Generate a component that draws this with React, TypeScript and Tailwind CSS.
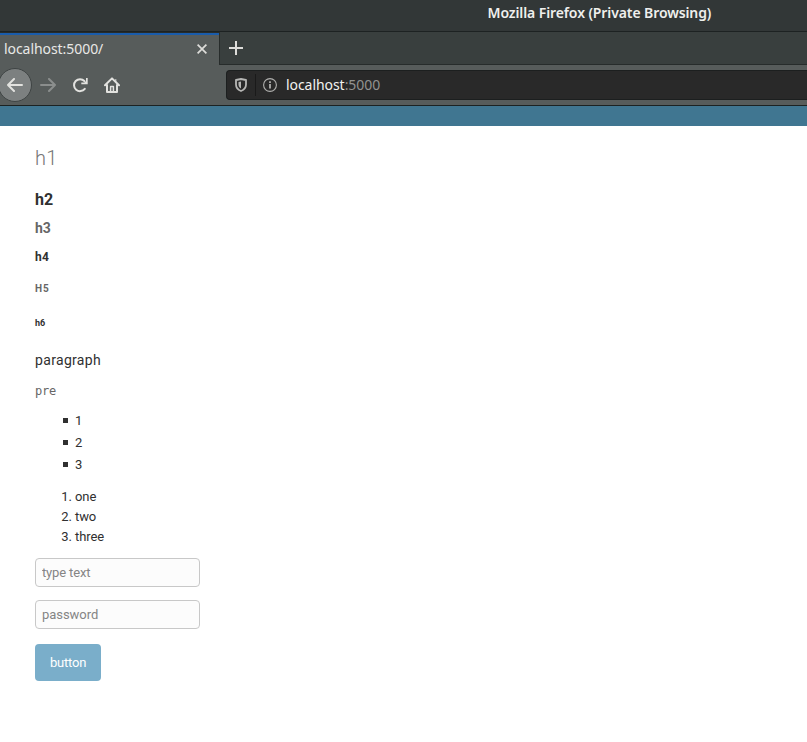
import React from "react";

const chromeFont = "font-['Noto_Sans','Open_Sans',sans-serif]";

function TabStrip() {
  return (
    <div className="flex h-[33px]">
      <div className="flex h-[33px] w-[219px] flex-col bg-[#575c5b]">
        <div className="h-px bg-[#272c2b]" />
        <div className="h-[2px] bg-[#1a5cab]" />
        <div className="flex flex-1 items-center justify-between pb-px pl-1 pr-[12px]">
          <span className="mb-[2px] whitespace-nowrap text-[14px] leading-5 tracking-[-0.06px] text-[#e8e8e6]">localhost:5000/</span>
          <svg className="mb-[2px]" width="10" height="10" viewBox="0 0 10 10" fill="none" stroke="#deddda" strokeWidth="1.7">
            <path d="M.6.6l8.800 8.800M9.400.6L.6 9.400" />
          </svg>
        </div>
      </div>
      <div className="flex flex-1 items-center border-b border-l border-[#272c2b] bg-[#393f3e] pl-[9px]">
        <svg width="14" height="14" viewBox="0 0 14 14" fill="none" stroke="#deddda" strokeWidth="2">
          <path d="M7 0v14M0 7h14" />
        </svg>
      </div>
    </div>
  );
}

function NavBar() {
  return (
    <div className="flex h-[41px] items-center border-b border-[#1c2222] bg-[#575c5b]">
      <div className="-ml-[2px] flex h-[34px] w-[34px] shrink-0 items-center justify-center rounded-full border border-[#3f4444] bg-[#7c8080]">
        <svg width="16" height="14" viewBox="0 0 16 14" fill="none" stroke="#e2e2df" strokeWidth="2" strokeLinecap="round" strokeLinejoin="round">
          <path d="M15 7H1M7 1L1 7l6 6" />
        </svg>
      </div>
      <svg className="ml-2 shrink-0" width="16" height="14" viewBox="0 0 16 14" fill="none" stroke="#8b8e8d" strokeWidth="2" strokeLinecap="round" strokeLinejoin="round">
        <path d="M1 7h14M9 1l6 6-6 6" />
      </svg>
      <svg className="ml-4 shrink-0" width="16" height="16" viewBox="0 0 16 16">
        <path d="M12.800 11.800A6 6 0 1 1 12.400 4" fill="none" stroke="#e2e2df" strokeWidth="2" strokeLinecap="round" />
        <path d="M15.700 1v6.200H9.300V5.600h3L14 3.900V1z" fill="#e2e2df" />
      </svg>
      <svg className="ml-4 shrink-0" width="16" height="16" viewBox="0 0 16 16" fill="none" stroke="#e2e2df" strokeWidth="2" strokeLinecap="round" strokeLinejoin="round">
        <path d="M1 8.300L8 1.400l7 6.900M3 8v7h10V8" />
        <path d="M6.600 14.500V9.600h2.800v4.900" strokeWidth="1.500" />
        <path d="M11.800 2.500v2" strokeWidth="1" />
      </svg>
      <div className="ml-[106px] flex h-[30px] flex-1 items-center rounded-l border border-r-0 border-[#1c1f1f] bg-[#292929]">
        <svg className="ml-2 shrink-0" width="12" height="14" viewBox="0 0 12 14" fill="none">
          <path d="M6 1L11 2v4.500C11 10 8.500 12 6 13 3.500 12 1 10 1 6.500V2z" stroke="#b6b6b4" strokeWidth="1.800" strokeLinejoin="round" />
          <path d="M6 3.500v7C4.500 9.700 3.500 8.500 3.500 6.500V4z" fill="#b6b6b4" />
        </svg>
        <div className="ml-2 h-[22px] w-px bg-[#1a1a1a]" />
        <svg className="ml-[7px] shrink-0" width="14" height="14" viewBox="0 0 14 14" fill="none">
          <circle cx="7" cy="7" r="6.400" stroke="#b0b0ae" strokeWidth="1.100" />
          <path d="M7 6v4.500M7 3.300v1.700" stroke="#b6b6b4" strokeWidth="1.700" />
        </svg>
        <span className="ml-[9px] whitespace-nowrap text-[14px] leading-5 tracking-[-0.06px] text-[#f2f2f0]">
          localhost<span className="text-[#929290]">:5000</span>
        </span>
      </div>
    </div>
  );
}

export default function App() {
  return (
    <div className="h-[742px] w-[807px] overflow-hidden bg-white font-[Roboto,sans-serif] text-[#303030]">
      <header className={chromeFont}>
        <div className="flex h-8 border-b border-[#1d2222] bg-[#323737] pl-[487.500px] pt-[3px]">
          <span className="whitespace-nowrap text-[14px] font-semibold leading-5 tracking-[-0.1px] text-[#efefed]">
            Mozilla Firefox (Private Browsing)
          </span>
        </div>
        <TabStrip />
        <NavBar />
      </header>
      <div className="h-5 bg-[#407691]" />
      <main className="flex flex-col items-start pl-[35px] pt-[18px]">
        <h1 className="text-[20px] font-light leading-7 tracking-[0.3px] text-[#777]">h1</h1>
        <h2 className="mt-[18px] text-[16px] font-bold leading-5">h2</h2>
        <h3 className="mt-[8px] text-[14px] font-bold leading-5 text-[#666]">h3</h3>
        <h4 className="mt-[9px] text-[12px] font-bold leading-5 tracking-[0.2px]">h4</h4>
        <h5 className="mt-[12px] text-[10px] font-bold leading-5 tracking-[1px] text-[#666]">H5</h5>
        <h6 className="mt-[14px] text-[9px] font-bold leading-5">h6</h6>
        <p className="mt-[17px] text-[14px] leading-5 tracking-[0.33px]">paragraph</p>
        <pre className="mt-[11px] font-['DejaVu_Sans_Mono',monospace] text-[12px] leading-5 tracking-[-0.2px] text-[#666]">pre</pre>
        <ul className="mt-[9px] list-none pl-[28px] text-[13px] leading-[22px]">
          {["1", "2", "3"].map((item) => (
            <li key={item} className="flex items-center">
              <span className="mb-px mr-[7px] h-[5px] w-[5px] bg-[#303030]" />
              {item}
            </li>
          ))}
        </ul>
        <ol className="mt-[11px] list-decimal pl-10 text-[13px] leading-5 tracking-[-0.1px]">
          <li>one</li>
          <li>two</li>
          <li>three</li>
        </ol>
        <input
          type="text"
          placeholder="type text"
          className="mt-[11px] h-[29px] w-[165px] rounded border border-[#c8c8c8] bg-[#fcfcfc] px-[6px] text-[13px] tracking-[-0.15px] placeholder:text-[#858585]"
        />
        <input
          type="password"
          placeholder="password"
          className="mt-[13px] h-[29px] w-[165px] rounded border border-[#c8c8c8] bg-[#fcfcfc] px-[6px] text-[13px] tracking-[-0.05px] placeholder:text-[#858585]"
        />
        <button className="mt-[15px] h-[37px] w-[66px] rounded bg-[#7aaeca] text-[13px] tracking-[-0.2px] text-white">button</button>
      </main>
    </div>
  );
}
